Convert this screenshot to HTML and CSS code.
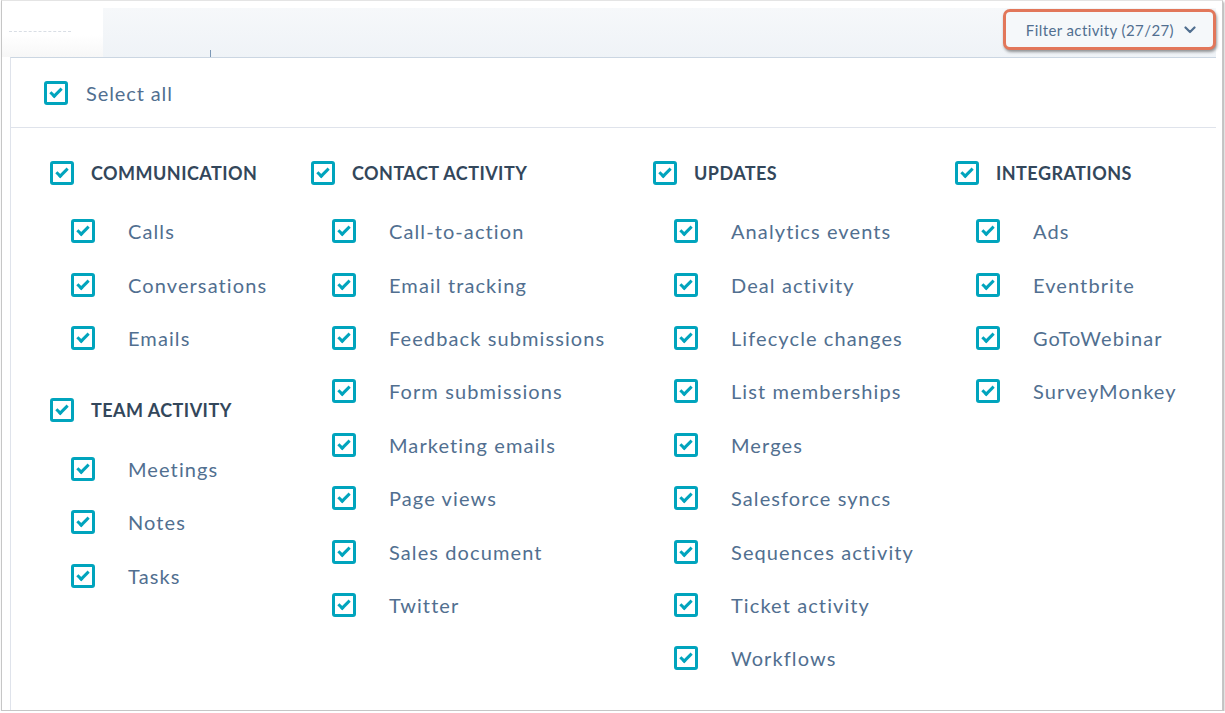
FILE: index.html
```html
<!DOCTYPE html>
<html lang="en">
<head>
    <meta charset="UTF-8">
    <title>Filter activity</title>
    <link rel="stylesheet" href="styles.css">
</head>
<body>

    <div class="shot">
        <div class="topbar">
            <div class="side"><div class="dash"></div></div>
            <div class="tabbar">
                <span class="tick"></span>
                <button class="filter-btn">Filter activity (27/27)
                    <svg width="12" height="8" viewBox="0 0 12 8"><path d="M1.5 1.5 L6 6 L10.5 1.5" fill="none" stroke="#516f90" stroke-width="2.2" stroke-linecap="round" stroke-linejoin="round"/></svg>
                </button>
            </div>
        </div>

        <div class="panel">
            <div class="select-all">
                <span class="cb"></span>
                <span>Select all</span>
            </div>

            <div class="columns">
                <div class="col col-1">
                    <div class="group">
                        <div class="group-head"><span class="cb"></span>Communication</div>
                        <div class="item"><span class="cb"></span>Calls</div>
                        <div class="item"><span class="cb"></span>Conversations</div>
                        <div class="item"><span class="cb"></span>Emails</div>
                    </div>
                    <div class="group">
                        <div class="group-head"><span class="cb"></span>Team activity</div>
                        <div class="item"><span class="cb"></span>Meetings</div>
                        <div class="item"><span class="cb"></span>Notes</div>
                        <div class="item"><span class="cb"></span>Tasks</div>
                    </div>
                </div>

                <div class="col col-2">
                    <div class="group">
                        <div class="group-head"><span class="cb"></span>Contact activity</div>
                        <div class="item"><span class="cb"></span>Call-to-action</div>
                        <div class="item"><span class="cb"></span>Email tracking</div>
                        <div class="item"><span class="cb"></span>Feedback submissions</div>
                        <div class="item"><span class="cb"></span>Form submissions</div>
                        <div class="item"><span class="cb"></span>Marketing emails</div>
                        <div class="item"><span class="cb"></span>Page views</div>
                        <div class="item"><span class="cb"></span>Sales document</div>
                        <div class="item"><span class="cb"></span>Twitter</div>
                    </div>
                </div>

                <div class="col col-3">
                    <div class="group">
                        <div class="group-head"><span class="cb"></span>Updates</div>
                        <div class="item"><span class="cb"></span>Analytics events</div>
                        <div class="item"><span class="cb"></span>Deal activity</div>
                        <div class="item"><span class="cb"></span>Lifecycle changes</div>
                        <div class="item"><span class="cb"></span>List memberships</div>
                        <div class="item"><span class="cb"></span>Merges</div>
                        <div class="item"><span class="cb"></span>Salesforce syncs</div>
                        <div class="item"><span class="cb"></span>Sequences activity</div>
                        <div class="item"><span class="cb"></span>Ticket activity</div>
                        <div class="item"><span class="cb"></span>Workflows</div>
                    </div>
                </div>

                <div class="col col-4">
                    <div class="group">
                        <div class="group-head"><span class="cb"></span>Integrations</div>
                        <div class="item"><span class="cb"></span>Ads</div>
                        <div class="item"><span class="cb"></span>Eventbrite</div>
                        <div class="item"><span class="cb"></span>GoToWebinar</div>
                        <div class="item"><span class="cb"></span>SurveyMonkey</div>
                    </div>
                </div>
            </div>
        </div>
    </div>

</body>
</html>
```

FILE: styles.css
```css
body {
    margin: 0;
    padding: 0;
    background: #fff;
    font-family: Lato, "Open Sans", sans-serif;
}
.shot {
    margin-left: 1px;
    width: 1220px;
    height: 709px;
    border: 1px solid #c6c6c6;
    border-top-color: #e4e4e4;
    box-shadow: 1px 2px 2px rgba(0, 0, 0, 0.35);
    background: #fff;
    overflow: hidden;
}
.topbar {
    display: flex;
    height: 56px;
}
.side {
    width: 101px;
    background: linear-gradient(to bottom, #fff 60%, #f7f7f7);
}
.dash {
    margin: 30px 0 0 7px;
    width: 62px;
    border-top: 1px dashed #d9dee5;
}
.tabbar {
    flex: 1;
    margin: 7px 6px 0 0;
    background: linear-gradient(to bottom, #f6f8fa, #eff3f7);
    display: flex;
    justify-content: flex-end;
    align-items: flex-start;
    position: relative;
}
.tick {
    position: absolute;
    left: 107px;
    bottom: 0;
    width: 1px;
    height: 7px;
    background: #7c98b6;
}
.filter-btn {
    margin-top: 1px;
    width: 213px;
    height: 41px;
    box-sizing: border-box;
    border: 3px solid #e2775a;
    border-radius: 7px;
    background: #f5f8fa;
    box-shadow: 1px 2px 3px rgba(0, 0, 0, 0.4);
    font-family: Lato, sans-serif;
    font-size: 15px;
    color: #516f90;
    letter-spacing: 0.4px;
    display: flex;
    align-items: center;
    justify-content: flex-end;
    gap: 10px;
    padding: 0 17px 0 0;
}
.panel {
    margin: 0 6px 0 8px;
    border-left: 1px solid #dfe3eb;
    border-top: 1px solid #cbd6e2;
    height: 660px;
}
.select-all {
    height: 69px;
    border-bottom: 1px solid #dfe3eb;
    display: flex;
    align-items: center;
    gap: 18px;
    padding-left: 33px;
    font-size: 20px;
    color: #516f90;
    letter-spacing: 0.9px;
}
.cb {
    flex: none;
    position: relative;
    width: 24px;
    height: 24px;
    box-sizing: border-box;
    border: 3px solid #00a4bd;
    border-radius: 3px;
    background: #fff;
}
.cb::after {
    content: "";
    position: absolute;
    left: 3px;
    top: 4px;
    width: 12px;
    height: 7px;
    box-sizing: border-box;
    border-left: 3.5px solid #00a4bd;
    border-bottom: 3.5px solid #00a4bd;
    transform: rotate(-45deg);
}
.columns {
    display: grid;
    grid-template-columns: 261px 342px 302px 1fr;
    padding: 18px 0 0 39px;
}
.group + .group {
    margin-top: 19px;
}
.group-head {
    height: 53px;
    margin-bottom: 5.5px;
    display: flex;
    align-items: center;
    gap: 17px;
    font-size: 18px;
    font-weight: 700;
    text-transform: uppercase;
    color: #33475b;
    letter-spacing: 0.45px;
}
.item {
    height: 53.4px;
    display: flex;
    align-items: center;
    gap: 33px;
    padding-left: 21px;
    font-size: 20px;
    color: #516f90;
    letter-spacing: 1.1px;
}
```
